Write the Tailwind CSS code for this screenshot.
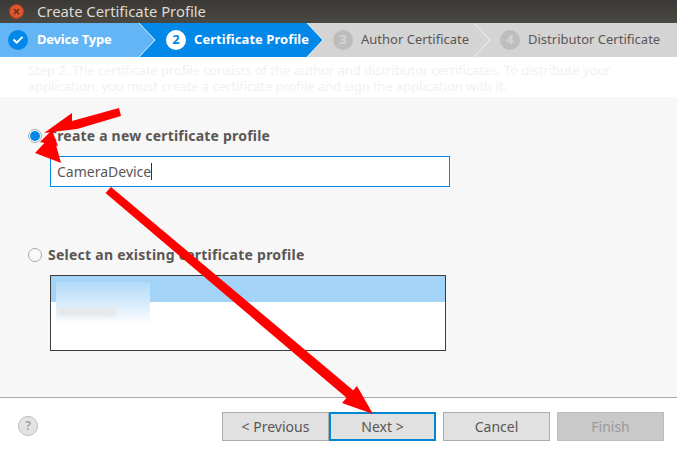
<!DOCTYPE html>
<html lang="en">
<head>
    <meta charset="UTF-8">
    <title>Create Certificate Profile</title>
    <script src="https://cdn.jsdelivr.net/npm/@tailwindcss/browser@4"></script>
</head>
<body class="relative w-[677px] h-[454px] overflow-hidden bg-white text-[#5a5654] font-['Noto_Sans',sans-serif]">

    <!-- Title bar -->
    <div class="h-[23px] flex items-center bg-gradient-to-b from-[#3a3935] to-[#4a4843]">
        <div class="ml-[9px] w-[15px] h-[15px] rounded-full bg-[#e0552c] border border-[#a8401f] flex items-center justify-center">
            <svg width="7" height="7" viewBox="0 0 7 7"><path d="M1 1l5 5M6 1L1 6" stroke="#5b2a1a" stroke-width="1.2"/></svg>
        </div>
        <span class="ml-[13px] text-[14.8px] text-[#dfdbd2]">Create Certificate Profile</span>
    </div>

    <!-- Steps -->
    <div class="h-[34px] flex bg-[#d4d4d4] text-[13px]">
        <div class="w-[139px] shrink-0 bg-[#64b5f6] flex items-center pl-[8px] gap-[9px] text-white font-bold">
            <div class="w-[20px] h-[20px] shrink-0 rounded-full bg-[#0288e8] flex items-center justify-center">
                <svg width="12" height="10" viewBox="0 0 12 10"><path d="M1.5 4.500l3.200 3.200 5.800-5.800" fill="none" stroke="#fff" stroke-width="2"/></svg>
            </div>
            <span class="tracking-[-0.2px]">Device Type</span>
        </div>
        <svg class="shrink-0" width="17" height="34" viewBox="0 0 17 34">
            <rect width="17" height="34" fill="#0288e8"/>
            <path d="M0 0L16 17L0 34Z" fill="#64b5f6"/>
            <path d="M0 0L16 17L0 34" fill="none" stroke="#e4f1fb" stroke-width="1"/>
        </svg>
        <div class="w-[151px] shrink-0 bg-[#0288e8] flex items-center pl-[10px] gap-[8px] text-white font-bold">
            <div class="w-[20px] h-[20px] shrink-0 rounded-full bg-white text-[#0288e8] text-[13px] flex items-center justify-center">2</div>
            <span class="relative z-10 tracking-[0.06px] whitespace-nowrap">Certificate Profile</span>
        </div>
        <svg class="shrink-0" width="17" height="34" viewBox="0 0 17 34">
            <path d="M0 0L16 17L0 34Z" fill="#0288e8"/>
            <path d="M0 0L16 17L0 34" fill="none" stroke="#f2f2f2" stroke-width="1"/>
        </svg>
        <div class="w-[150px] shrink-0 flex items-center pl-[9px] gap-[8px]">
            <div class="w-[20px] h-[20px] shrink-0 rounded-full bg-[#bdbdbd] text-[#d4d4d4] font-bold flex items-center justify-center">3</div>
            <span class="whitespace-nowrap">Author Certificate</span>
        </div>
        <svg class="shrink-0" width="17" height="34" viewBox="0 0 17 34">
            <path d="M0 0L16 17L0 34" fill="none" stroke="#f2f2f2" stroke-width="1"/>
        </svg>
        <div class="flex-1 flex items-center pl-[9px] gap-[8px]">
            <div class="w-[20px] h-[20px] shrink-0 rounded-full bg-[#bdbdbd] text-[#d4d4d4] font-bold flex items-center justify-center">4</div>
            <span class="whitespace-nowrap">Distributor Certificate</span>
        </div>
    </div>

    <!-- Description -->
    <div class="h-[40px] pl-[28px] pt-[5px] text-[13px] leading-[16px] tracking-[-0.07px] text-[#f3f1f0] whitespace-nowrap">
        <p>Step 2. The certificate profile consists of the author and distributor certificates. To distribute your</p>
        <p>application, you must create a certificate profile and sign the application with it.</p>
    </div>

    <!-- Content -->
    <div class="h-[301px] bg-[#f7f7f7] border-b border-[#a8a8a8] pl-[28px] pt-[31px]">
        <div class="flex items-center h-[16px] gap-[6px]">
            <div class="w-[14px] h-[14px] rounded-full bg-white border border-[#a9a9a9] flex items-center justify-center">
                <div class="w-[10px] h-[10px] rounded-full bg-[#0288e8]"></div>
            </div>
            <span class="pb-[2px] text-[14px] tracking-[0.2px] font-bold">Create a new certificate profile</span>
        </div>
        <div class="ml-[22px] mt-[12px] w-[400px] h-[31px] bg-white border border-[#0288e8] flex items-center pl-[6px] text-[14px]">
            <span>CameraDevice</span><span class="w-px h-[17px] bg-[#333]"></span>
        </div>
        <div class="flex items-center h-[16px] gap-[6px] mt-[60px]">
            <div class="w-[14px] h-[14px] rounded-full bg-[#f9f9f9] border border-[#a9a9a9]"></div>
            <span class="pb-[2px] text-[14px] tracking-[0.25px] font-bold">Select an existing certificate profile</span>
        </div>
        <div class="relative ml-[22px] mt-[12px] w-[396px] h-[76px] bg-white border border-[#3c3c3c]">
            <div class="h-[26px] bg-[#a4d3f8]"></div>
            <!-- blurred out names -->
            <div class="absolute left-[5px] top-[6px] w-[94px] h-[43px] bg-gradient-to-b from-[#b0daf9] via-[#d8ecfb] to-white">
                <div class="mt-[26px] ml-[2px] w-[58px] h-[8px] rounded-sm bg-[#e6e6e6] blur-[2px]"></div>
            </div>
        </div>
    </div>

    <!-- Buttons -->
    <div class="flex items-center h-[56px] pl-[18px] pr-[13px] text-[14px]">
        <div class="w-[20px] h-[20px] rounded-full bg-[#e3e3e3] border border-[#bdbdbd] text-[#a8a8a8] text-[12px] font-bold flex items-center justify-center">?</div>
        <div class="ml-auto w-[107px] h-[29px] bg-[#e1e1e1] border border-[#ababab] flex items-center justify-center">&lt; Previous</div>
        <div class="w-[107px] h-[29px] bg-[#e1e1e1] border-2 border-[#0288d1] flex items-center justify-center">Next &gt;</div>
        <div class="ml-[7px] w-[107px] h-[29px] bg-[#e1e1e1] border border-[#ababab] flex items-center justify-center">Cancel</div>
        <div class="ml-[7px] w-[107px] h-[29px] bg-[#c9c9c9] border border-[#bdbdbd] text-[#9a9a9a] flex items-center justify-center">Finish</div>
    </div>

    <!-- Red annotation arrows -->
    <svg class="absolute left-0 top-0 pointer-events-none" width="677" height="454" viewBox="0 0 677 454">
        <path d="M119 108L121 116L77 129L44 133L72 113L72 121Z" fill="#ff0000"/>
        <path d="M51 136L35 153L61 163L56 145Z" fill="#ff0000"/>
        <path d="M40 142L52 130L58 146Z" fill="#ff0000"/>
        <path d="M111 187L105.500 193L348 399L354 391Z" fill="#ff0000"/>
        <path d="M342 403L357 386L373 414Z" fill="#ff0000"/>
    </svg>
</body>
</html>
